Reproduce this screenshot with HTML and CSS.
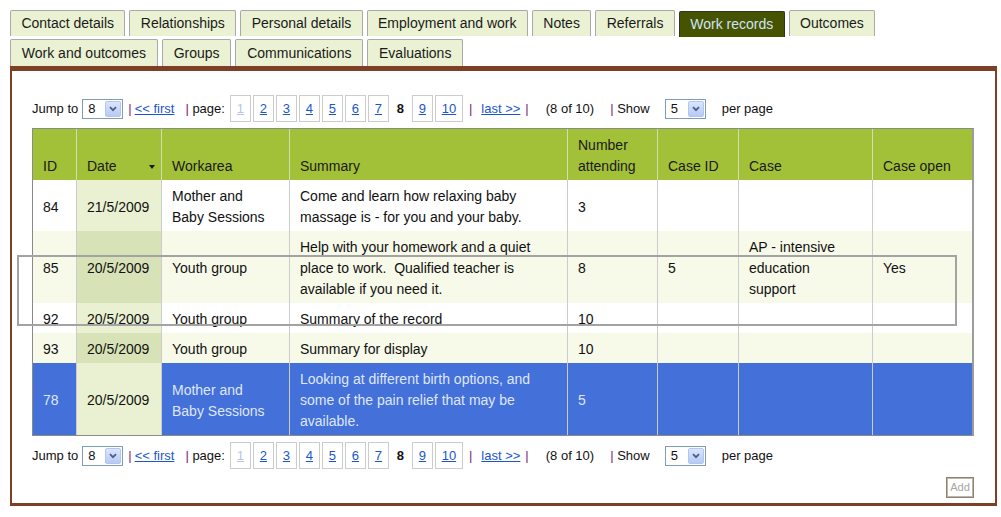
FILE: index.html
```html
<!DOCTYPE html>
<html>
<head>
<meta charset="utf-8">
<title>Work records</title>
<link rel="stylesheet" href="styles.css">
</head>
<body>
<div class="page">
  <div class="tabrow">
    <span class="tab">Contact details</span>
    <span class="tab">Relationships</span>
    <span class="tab">Personal details</span>
    <span class="tab">Employment and work</span>
    <span class="tab">Notes</span>
    <span class="tab">Referrals</span>
    <span class="tab active">Work records</span>
    <span class="tab">Outcomes</span>
  </div>
  <div class="tabrow row2">
    <span class="tab">Work and outcomes</span>
    <span class="tab">Groups</span>
    <span class="tab">Communications</span>
    <span class="tab">Evaluations</span>
  </div>

  <div class="panel">
    <div class="pager">
      <span>Jump to</span>
      <span class="sel s1"><span class="sv">8</span><span class="sb"><svg width="8" height="6" viewBox="0 0 8 6"><path d="M1 1.2 L4 4.2 L7 1.2" fill="none" stroke="#4b5f88" stroke-width="1.8"/></svg></span></span>
      <span class="bar b1">|</span>
      <a class="lnk first">&lt;&lt; first</a>
      <span class="pg"><span class="bar">|</span> page:</span>
      <span class="pages">
        <a class="pb faded">1</a><a class="pb">2</a><a class="pb">3</a><a class="pb">4</a><a class="pb">5</a><a class="pb">6</a><a class="pb">7</a><b class="cur">8</b><a class="pb">9</a><a class="pb wide">10</a>
      </span>
      <span class="bar b2">|</span>
      <a class="lnk last">last &gt;&gt;</a>
      <span class="bar b3">|</span>
      <span class="count">(8 of 10)</span>
      <span class="show"><span class="bar">|</span> Show</span>
      <span class="sel s2"><span class="sv">5</span><span class="sb"><svg width="8" height="6" viewBox="0 0 8 6"><path d="M1 1.2 L4 4.2 L7 1.2" fill="none" stroke="#4b5f88" stroke-width="1.8"/></svg></span></span>
      <span class="pp">per page</span>
    </div>

    <table class="grid">
      <thead>
        <tr>
          <th class="c-id">ID</th>
          <th class="c-date"><span class="sort"></span>Date</th>
          <th class="c-area">Workarea</th>
          <th class="c-sum">Summary</th>
          <th class="c-num">Number attending</th>
          <th class="c-cid">Case ID</th>
          <th class="c-case">Case</th>
          <th class="c-open">Case open</th>
        </tr>
      </thead>
      <tbody>
        <tr>
          <td>84</td><td class="d">21/5/2009</td><td>Mother and Baby Sessions</td>
          <td>Come and learn how relaxing baby massage is - for you and your baby.</td>
          <td>3</td><td></td><td></td><td></td>
        </tr>
        <tr class="alt">
          <td>85</td><td class="d">20/5/2009</td><td>Youth group</td>
          <td>Help with your homework and a quiet place to work.&nbsp; Qualified teacher is available if you need it.</td>
          <td>8</td><td>5</td><td>AP - intensive education support</td><td>Yes</td>
        </tr>
        <tr>
          <td>92</td><td class="d">20/5/2009</td><td>Youth group</td>
          <td>Summary of the record</td>
          <td>10</td><td></td><td></td><td></td>
        </tr>
        <tr class="alt">
          <td>93</td><td class="d">20/5/2009</td><td>Youth group</td>
          <td>Summary for display</td>
          <td>10</td><td></td><td></td><td></td>
        </tr>
        <tr class="chosen">
          <td>78</td><td class="d">20/5/2009</td><td>Mother and Baby Sessions</td>
          <td>Looking at different birth options, and some of the pain relief that may be available.</td>
          <td>5</td><td></td><td></td><td></td>
        </tr>
      </tbody>
    </table>

    <div class="pager">
      <span>Jump to</span>
      <span class="sel s1"><span class="sv">8</span><span class="sb"><svg width="8" height="6" viewBox="0 0 8 6"><path d="M1 1.2 L4 4.2 L7 1.2" fill="none" stroke="#4b5f88" stroke-width="1.8"/></svg></span></span>
      <span class="bar b1">|</span>
      <a class="lnk first">&lt;&lt; first</a>
      <span class="pg"><span class="bar">|</span> page:</span>
      <span class="pages">
        <a class="pb faded">1</a><a class="pb">2</a><a class="pb">3</a><a class="pb">4</a><a class="pb">5</a><a class="pb">6</a><a class="pb">7</a><b class="cur">8</b><a class="pb">9</a><a class="pb wide">10</a>
      </span>
      <span class="bar b2">|</span>
      <a class="lnk last">last &gt;&gt;</a>
      <span class="bar b3">|</span>
      <span class="count">(8 of 10)</span>
      <span class="show"><span class="bar">|</span> Show</span>
      <span class="sel s2"><span class="sv">5</span><span class="sb"><svg width="8" height="6" viewBox="0 0 8 6"><path d="M1 1.2 L4 4.2 L7 1.2" fill="none" stroke="#4b5f88" stroke-width="1.8"/></svg></span></span>
      <span class="pp">per page</span>
    </div>

    <div class="actions"><span class="add">Add</span></div>
  </div>
</div>
<div class="dragbox"></div>
</body>
</html>
```

FILE: styles.css
```css
html, body {
  margin: 0;
  padding: 0;
  background: #ffffff;
}
body {
  font-family: "Liberation Sans", Arial, sans-serif;
  color: #111111;
  position: relative;
}
.page {
  padding: 10px 4px 0 10px;
  width: 987px;
}

/* Tabs */
.tabrow {
  display: flex;
  gap: 4px;
  align-items: flex-start;
  height: 26px;
}
.tabrow.row2 {
  margin-top: 3px;
  height: 27px;
}
.tab {
  box-sizing: border-box;
  height: 26px;
  padding: 0 10.4px;
  border: 1px solid #a9a9a9;
  border-bottom: none;
  border-radius: 2px 2px 0 0;
  background: #eaf2d3;
  font-size: 14px;
  line-height: 25px;
  color: #1a1a1a;
  white-space: nowrap;
}
.row2 .tab {
  height: 27px;
  line-height: 26px;
  padding: 0 10.8px;
}
.tab.active {
  background: #465300;
  border-color: #2f3424;
  color: #d0e3f6;
  margin-top: 1px;
}

/* Panel */
.panel {
  box-sizing: border-box;
  width: 987px;
  border-style: solid;
  border-color: #7e4024;
  border-width: 5px 2px 3px 2px;
  padding: 24px 21px 5px 20px;
}

/* Pager */
.pager {
  display: flex;
  align-items: center;
  height: 27px;
  font-size: 13px;
  color: #111;
  white-space: nowrap;
}
.pager + .grid { margin-top: 6px; }
.grid + .pager { margin-top: 6px; }
.bar { color: #7a1d7a; }
.lnk {
  color: #1a55d0;
  text-decoration: underline;
}
.sel {
  box-sizing: border-box;
  width: 41px;
  height: 20px;
  border: 1px solid #7f9db9;
  background: #fff;
  display: flex;
  align-items: center;
  justify-content: space-between;
  padding: 0 1px 0 5px;
}
.sv { font-size: 13px; }
.sb {
  box-sizing: border-box;
  width: 16px;
  height: 16px;
  border: 1px solid #b3c6ef;
  border-radius: 2px;
  background: linear-gradient(#dbe5fc, #b6caf6);
  display: flex;
  align-items: center;
  justify-content: center;
}
.s1 { margin-left: 4px; }
.b1 { margin-left: 5px; }
.first { margin-left: 3px; }
.pg { margin-left: 11px; }
.pages {
  margin-left: 5px;
  display: flex;
  gap: 2px;
  align-items: center;
}
.pb {
  box-sizing: border-box;
  width: 21px;
  height: 27px;
  border: 1px solid #cccccc;
  display: flex;
  align-items: center;
  justify-content: center;
  color: #1a55d0;
  text-decoration: underline;
}
.pb.wide { width: 28px; }
.pb.faded { color: #b7c2ea; }
.cur {
  width: 19px;
  text-align: center;
  font-weight: bold;
  color: #111;
}
.b2 { margin-left: 6px; }
.last { margin-left: 9px; }
.b3 { margin-left: 5px; }
.count { margin-left: 17px; }
.show { margin-left: 16px; }
.s2 { margin-left: 15px; }
.pp { margin-left: 16px; }

/* Table */
.grid {
  box-sizing: border-box;
  width: 942px;
  table-layout: fixed;
  border-collapse: separate;
  border-spacing: 0;
  border: 1px solid #8a8a8a;
  border-right: 2px solid #9c9c9c;
  font-size: 14px;
  line-height: 21px;
}
.grid th, .grid td {
  box-sizing: border-box;
  text-align: left;
  font-weight: normal;
  border-left: 1px solid #cccccc;
}
.grid th:first-child, .grid td:first-child { border-left: none; }
.grid th {
  background: #a3c039;
  color: #1a1a1a;
  vertical-align: bottom;
  padding: 6px 12px 3px 10px;
  border-left-color: #d3ddb0;
}
.grid td {
  vertical-align: middle;
  padding: 6px 12px 3px 10px;
  color: #111;
}
.c-id { width: 43px; }
.c-date { width: 85px; }
.c-area { width: 128px; }
.c-sum { width: 278px; }
.c-num { width: 90px; }
.c-cid { width: 81px; }
.c-case { width: 134px; }
.c-open { width: 100px; }

.sort {
  float: right;
  margin: 9px -6px 0 0;
  width: 0;
  height: 0;
  border-left: 3px solid transparent;
  border-right: 3px solid transparent;
  border-top: 4px solid #1a1a1a;
}
.grid td.d { background: #e9f1d2; }
.grid tr.alt td { background: #f7f9e9; }
.grid tr.alt td.d { background: #d8e2b7; }
.grid tr.chosen td {
  background: #4470d9;
  color: #dfe7fb;
}
.grid tr.chosen td.d {
  background: #e9f1d2;
  color: #111;
}

/* Add button */
.actions {
  display: flex;
  justify-content: flex-end;
  margin-top: 8px;
}
.add {
  box-sizing: border-box;
  width: 28px;
  height: 21px;
  border: 1px solid #8a8272;
  box-shadow: inset 0 0 0 1px #bdb6a8;
  font-size: 11px;
  line-height: 19px;
  text-align: center;
  color: #a6a6a6;
}

/* Drag outline overlay */
.dragbox {
  position: absolute;
  left: 17px;
  top: 255px;
  width: 940px;
  height: 71px;
  box-sizing: border-box;
  border: 2px solid #a3a3a3;
  pointer-events: none;
}
```
